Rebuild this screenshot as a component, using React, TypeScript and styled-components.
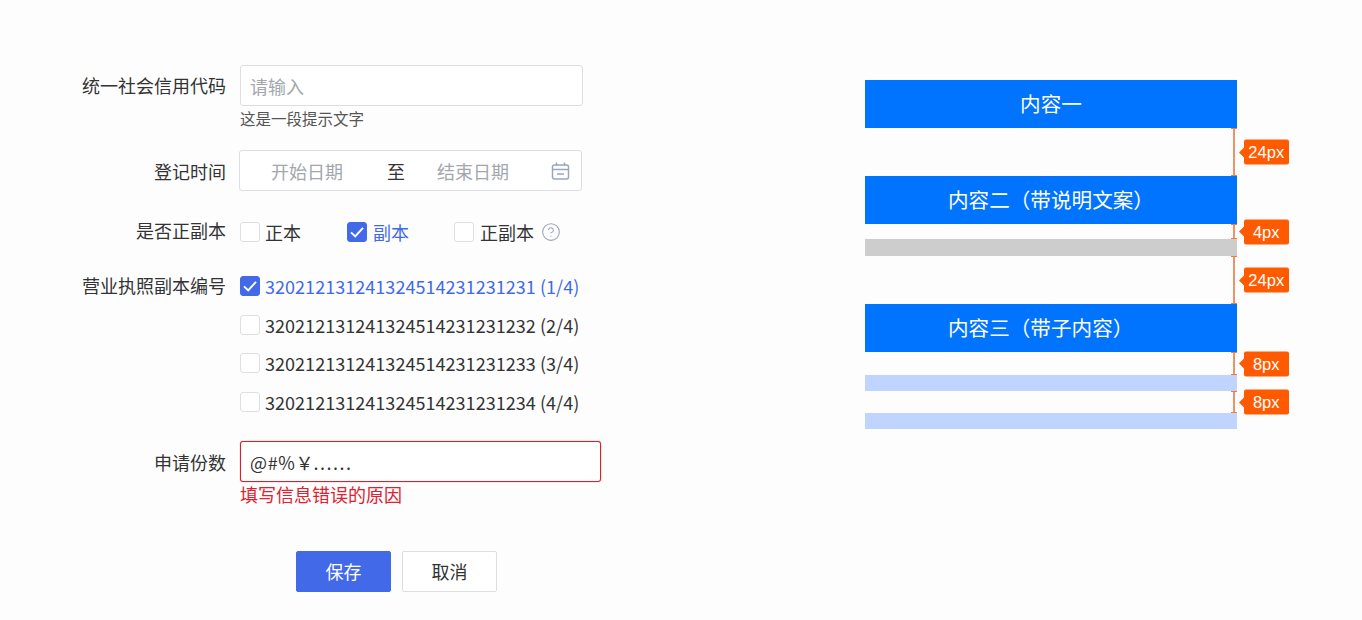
import styled, { createGlobalStyle } from "styled-components";
import { CircleHelp } from "lucide-react";

const FONT = `"Noto Sans CJK SC", "Noto Sans", sans-serif`;

const licenseNumbers = [
    { no: "320212131241324514231231231 (1/4)", checked: true },
    { no: "320212131241324514231231232 (2/4)", checked: false },
    { no: "320212131241324514231231233 (3/4)", checked: false },
    { no: "320212131241324514231231234 (4/4)", checked: false },
];

function Check({ checked }: { checked?: boolean }) {
    return (
        <CheckBox $checked={checked}>
            {checked && (
                <svg width="16" height="16" viewBox="0 0 16 16" fill="none">
                    <path d="M2 8.4 L6.2 12.4 L14 3.8" stroke="#fff" strokeWidth="2" />
                </svg>
            )}
        </CheckBox>
    );
}

function CalendarIcon() {
    return (
        <svg width="20" height="20" viewBox="0 0 20 20" fill="none" stroke="#9aa7ba" strokeWidth="1.5">
            <rect x="1.5" y="4" width="16" height="14" rx="2" />
            <path d="M1.5 8.5 H17.5 M5.5 1.5 V5 M13.5 1.5 V5 M6 13 H13" />
        </svg>
    );
}

function Spacing({ height, label }: { height: number; label: string }) {
    return (
        <Gap $height={height}>
            <Ruler />
            <Badge>{label}</Badge>
        </Gap>
    );
}

function App() {
    return (
        <>
            <GlobalStyle />
            <Page>
                <Form>
                    <Field $mb={20}>
                        <Label>统一社会信用代码</Label>
                        <Control>
                            <TextInput placeholder="请输入" />
                            <Hint>这是一段提示文字</Hint>
                        </Control>
                    </Field>
                    <Field $mb={30}>
                        <Label $lh={42}>登记时间</Label>
                        <DateRange>
                            <DateInput placeholder="开始日期" />
                            <To>至</To>
                            <DateInput placeholder="结束日期" />
                            <CalendarSlot>
                                <CalendarIcon />
                            </CalendarSlot>
                        </DateRange>
                    </Field>
                    <Field $mb={34}>
                        <Label $lh={16}>是否正副本</Label>
                        <OptionRow>
                            <Option $gap={5}>
                                <Check />
                                <OptionText>正本</OptionText>
                            </Option>
                            <Option $gap={6}>
                                <Check checked />
                                <OptionText $active>副本</OptionText>
                            </Option>
                            <Option $gap={6}>
                                <Check />
                                <OptionText>正副本</OptionText>
                                <CircleHelp size={20} color="#9aa7ba" strokeWidth={1.3} />
                            </Option>
                        </OptionRow>
                    </Field>
                    <Field $mb={29}>
                        <Label $lh={18}>营业执照副本编号</Label>
                        <NumberList>
                            {licenseNumbers.map((item) => (
                                <NumberOption key={item.no}>
                                    <Check checked={item.checked} />
                                    <NumberText $active={item.checked}>{item.no}</NumberText>
                                </NumberOption>
                            ))}
                        </NumberList>
                    </Field>
                    <Field $mb={45}>
                        <Label $lh={43}>申请份数</Label>
                        <Control>
                            <ErrorValue>
                                <Symbols>@#%</Symbols>￥<Dots>......</Dots>
                            </ErrorValue>
                            <ErrorText>填写信息错误的原因</ErrorText>
                        </Control>
                    </Field>
                    <Actions>
                        <PrimaryButton>保存</PrimaryButton>
                        <GhostButton>取消</GhostButton>
                    </Actions>
                </Form>
                <Diagram>
                    <Bar>内容一</Bar>
                    <Spacing height={48} label="24px" />
                    <Bar $start>内容二（带说明文案）</Bar>
                    <Spacing height={15} label="4px" />
                    <GrayBar />
                    <Spacing height={48} label="24px" />
                    <Bar $start>内容三（带子内容）</Bar>
                    <Spacing height={23} label="8px" />
                    <LightBar />
                    <Spacing height={22} label="8px" />
                    <LightBar />
                </Diagram>
            </Page>
        </>
    );
}

export default App;

const GlobalStyle = createGlobalStyle`
    html, body {
        margin: 0;
        padding: 0;
        background: #fdfdfe;
    }
    * {
        box-sizing: border-box;
    }
`;

const Page = styled.div`
    width: 1362px;
    height: 620px;
    overflow: hidden;
    display: flex;
    align-items: flex-start;
    font-family: ${FONT};
    color: #333;
`;

const Form = styled.div`
    width: 865px;
    padding-top: 65px;
    padding-left: 60px;
`;

const Field = styled.div<{ $mb: number }>`
    display: flex;
    align-items: flex-start;
    margin-bottom: ${(p) => p.$mb}px;
`;

const Label = styled.div<{ $lh?: number }>`
    width: 166px;
    margin-right: 14px;
    text-align: right;
    font-size: 18px;
    line-height: ${(p) => p.$lh ?? 41}px;
    white-space: nowrap;
`;

const Control = styled.div`
    display: flex;
    flex-direction: column;
`;

const TextInput = styled.input`
    width: 343px;
    height: 41px;
    padding: 0 9px;
    border: 1px solid #dcdee2;
    border-radius: 3px;
    outline: none;
    background: #fff;
    font-family: ${FONT};
    font-size: 18px;
    color: #333;

    &::placeholder {
        color: #a3a7ad;
    }
`;

const ErrorValue = styled.div`
    width: 361px;
    height: 41px;
    padding: 2px 9px 0;
    display: flex;
    align-items: center;
    border: 1px solid #dd1f2c;
    border-radius: 3px;
    box-shadow: 0 0 1px #e0202c;
    background: #fff;
    font-size: 18px;
    white-space: pre;
`;

const Symbols = styled.span`
    letter-spacing: 0.6px;
`;

const Dots = styled.span`
    letter-spacing: 1.5px;
`;

const Hint = styled.div`
    font-size: 15.5px;
    line-height: 24px;
    color: #555;
`;

const ErrorText = styled.div`
    font-size: 18px;
    line-height: 24px;
    color: #e1202f;
`;

const DateRange = styled.div`
    width: 343px;
    height: 41px;
    margin-left: -1px;
    padding-left: 31px;
    display: flex;
    align-items: center;
    border: 1px solid #dcdee2;
    border-radius: 3px;
    background: #fff;
`;

const DateInput = styled.input`
    width: 73px;
    padding: 0;
    border: 0;
    outline: none;
    background: transparent;
    font-family: ${FONT};
    font-size: 18px;

    &::placeholder {
        color: #a3a7ad;
    }
`;

const To = styled.span`
    width: 93px;
    padding-left: 43px;
    font-size: 18px;
`;

const CalendarSlot = styled.span`
    display: flex;
    margin-left: 41px;
`;

const OptionRow = styled.div`
    display: flex;
    height: 20px;
`;

const Option = styled.div<{ $gap: number }>`
    width: 107px;
    display: flex;
    align-items: center;
    gap: ${(p) => p.$gap}px;
    white-space: nowrap;

    svg.lucide {
        flex: none;
        margin-left: 1px;
    }
`;

const CheckBox = styled.span<{ $checked?: boolean }>`
    flex: none;
    width: 20px;
    height: 20px;
    display: flex;
    align-items: center;
    justify-content: center;
    border: 1px solid ${(p) => (p.$checked ? "#4169e8" : "#dcdee2")};
    border-radius: 3px;
    background: ${(p) => (p.$checked ? "#4169e8" : "#fff")};
`;

const OptionText = styled.span<{ $active?: boolean }>`
    font-size: 18px;
    line-height: 20px;
    color: ${(p) => (p.$active ? "#4169e8" : "#333")};
`;

const NumberText = styled(OptionText)`
    letter-spacing: 0.04px;
`;

const NumberList = styled.div`
    display: flex;
    flex-direction: column;
    gap: 18.5px;
`;

const NumberOption = styled.div`
    height: 20px;
    display: flex;
    align-items: center;
    gap: 5px;
    white-space: nowrap;
`;

const Actions = styled.div`
    display: flex;
    gap: 11px;
    padding-left: 236px;
`;

const PrimaryButton = styled.button`
    width: 95px;
    height: 41px;
    border: 1px solid #4169e8;
    border-radius: 2px;
    background: #4169e8;
    font-family: ${FONT};
    font-size: 18px;
    color: #fff;
`;

const GhostButton = styled(PrimaryButton)`
    border-color: #dcdee2;
    background: #fff;
    color: #333;
`;

const Diagram = styled.div`
    width: 372px;
    margin-top: 80px;
    display: flex;
    flex-direction: column;
`;

const Bar = styled.div<{ $start?: boolean }>`
    height: 48px;
    padding-bottom: 2px;
    padding-left: ${(p) => (p.$start ? "83px" : "0")};
    display: flex;
    align-items: center;
    justify-content: ${(p) => (p.$start ? "flex-start" : "center")};
    background: #0073ff;
    font-size: 20.6px;
    color: #fff;
`;

const GrayBar = styled.div`
    height: 17px;
    background: #cdcdcd;
`;

const LightBar = styled.div`
    height: 16px;
    background: #bfd4ff;
`;

const Gap = styled.div<{ $height: number }>`
    position: relative;
    height: ${(p) => p.$height}px;
`;

const Ruler = styled.div`
    position: absolute;
    top: 0;
    bottom: 0;
    right: 0;
    width: 6px;
    border-top: 1px solid #f07a3c;
    border-bottom: 1px solid #f07a3c;

    &::after {
        content: "";
        position: absolute;
        top: 0;
        bottom: 0;
        left: 2px;
        width: 2px;
        background: #ec9468;
    }
`;

const Badge = styled.div`
    position: absolute;
    top: 50%;
    left: 378.5px;
    width: 45.5px;
    height: 25px;
    transform: translateY(-50%);
    display: flex;
    align-items: center;
    justify-content: center;
    border-radius: 2px;
    background: #ff5a00;
    font-family: "Liberation Sans", sans-serif;
    font-size: 16.5px;
    color: #fff;

    &::before {
        content: "";
        position: absolute;
        left: -5px;
        top: 50%;
        margin-top: -5px;
        border-top: 5px solid transparent;
        border-bottom: 5px solid transparent;
        border-right: 5px solid #ff5a00;
    }
`;
